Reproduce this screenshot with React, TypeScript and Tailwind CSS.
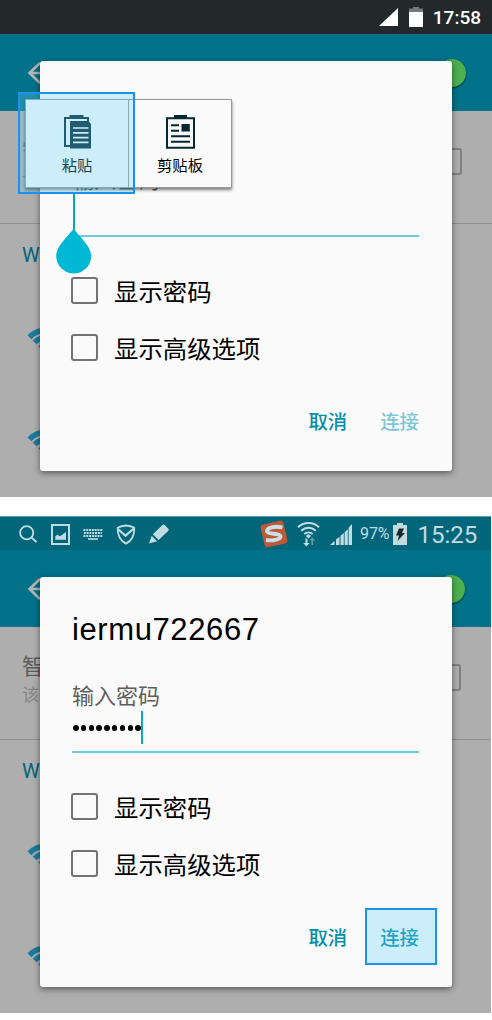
import type { ReactNode } from 'react';

const cjk = "font-['Noto_Sans_CJK_SC',sans-serif]";

function Wifi() {
  return (
    <svg width="40" height="30" viewBox="0 0 40 30" className="block" fill="none" stroke="#1b7b9d" strokeWidth="5.5">
      <path d="M2.4 10.2a24.5 24.5 0 0 1 34.6 0" />
      <path d="M7.6 15.4a17.1 17.1 0 0 1 24.2 0" />
      <path d="M19.7 27.5l-8.3-8.3a11.7 11.7 0 0 1 16.6 0z" fill="#1b7b9d" stroke="none" />
    </svg>
  );
}

function SettingsPage() {
  return (
    <>
      <div className="flex h-[77px] items-center justify-between bg-[#02728a] pr-[26px] pl-[27px]">
        <svg width="28" height="24" viewBox="0 0 28 24" fill="none" stroke="#b4b4b4" strokeWidth="2.6">
          <path d="M13 2 2.5 12 13 22M3 12h24" />
        </svg>
        <div className="size-7 rounded-full bg-[#4caf50] shadow-[0_1px_2px_rgba(0,0,0,0.6)]" />
      </div>
      <div className="flex h-[113px] items-start justify-between border-b border-[#8f8f8f] pr-[30px] pl-[22px]">
        <div className="pt-[22px] whitespace-nowrap">
          <div className="text-[22px] leading-[30px] text-[#5c5c5c]">智能网络切换</div>
          <div className="mt-[3px] text-[17px] leading-[24px] text-[#858585]">该功能</div>
        </div>
        <div className="mt-[37px] size-[27px] rounded-[3px] border-2 border-[#818181]" />
      </div>
      <div className="pt-[19px] pl-[22px] font-[Roboto] text-[20px] leading-[24px] text-[#00657a]">WLAN</div>
      <div className="flex flex-col gap-[72px] pt-[60px] pl-[27px]">
        <Wifi />
        <Wifi />
      </div>
    </>
  );
}

function Option({ children }: { children: ReactNode }) {
  return (
    <div className="flex h-[57px] items-center gap-[16px] text-[24.4px] leading-[36px] text-black">
      <span className="size-[27px] shrink-0 rounded-[3px] border-2 border-[#737373]" />
      <span className="whitespace-nowrap">{children}</span>
    </div>
  );
}

function Dialog({ title, value, ready }: { title: string; value: string; ready: boolean }) {
  return (
    <div className="absolute top-[61px] left-[40px] flex h-[410px] w-[412px] flex-col rounded-[3px] bg-[#fafafa] px-[32px] shadow-[0_2px_6px_rgba(0,0,0,0.5)]">
      <div className="mt-[32px] h-[42px] font-['Liberation_Sans',sans-serif] text-[31px] leading-[42px] tracking-[0.6px] text-black">{title}</div>
      <div className="mt-[27px] text-[22px] leading-[32px] text-[#5e5e5e]">输入密码</div>
      <div className="mt-[1px] mr-[1px] flex h-[42px] items-start border-b-2 border-[#6ccbdc]">
        <div className="flex h-[34px] items-center gap-[2.3px] pl-[1px]">
          {value.split('').map((_, i) => (
            <span key={i} className="size-[5.5px] rounded-full bg-black" />
          ))}
        </div>
        {ready && <span className="h-[33px] w-[2px] bg-[#08a8c8]" />}
      </div>
      <div className="-ml-[1px] pt-[25px]">
        <Option>显示密码</Option>
        <Option>显示高级选项</Option>
      </div>
      <div className="mt-[31px] mr-[1px] flex justify-end gap-[33px] text-[19.4px] leading-[28px] font-medium text-[#058faa]">
        <span>取消</span>
        <span className={ready ? '' : 'text-[#7cc8d6]'}>连接</span>
      </div>
    </div>
  );
}

function PasteIcon() {
  return (
    <svg width="27" height="34" viewBox="0 0 27 34" fill="#052731">
      <path d="M5.5 0h14v2H25v5h-2V4H2v26h5v2H0V2h5.5z" />
      <path d="M6 6h18.5l2.500 3v24.500H6z" />
      <path d="M9 13h15.500M9 17.800h15.500M9 22.600h15.500M9 27.400h15.500" stroke="#fafafa" strokeWidth="1.700" />
    </svg>
  );
}

function ClipboardIcon() {
  return (
    <svg width="29" height="34" viewBox="0 0 29 34" fill="none" stroke="#052731" strokeWidth="2">
      <path d="M1 3.200h27v29.600H1z" />
      <path d="M8 0h13v4H8zM15.500 9h8.300v7.500h-8.300z" fill="#052731" stroke="none" />
      <path d="M5 10.300h8M5 15.700h8M5 21.200h19M5 26.800h19" />
    </svg>
  );
}

function PastePopup() {
  return (
    <div className="absolute top-[99px] left-[25px] flex h-[89px] w-[207px] border border-[#999] bg-[#fafafa] text-[15.3px] leading-[22px] text-black shadow-[0_2px_3px_rgba(0,0,0,0.5)]">
      <div className="flex w-[103px] flex-col items-center border-r border-[#999] pt-[15px]">
        <PasteIcon />
        <span className="mt-[4px]">粘贴</span>
      </div>
      <div className="flex flex-1 flex-col items-center pt-[15px]">
        <ClipboardIcon />
        <span className="mt-[4px]">剪贴板</span>
      </div>
    </div>
  );
}

function DarkStatusBar() {
  return (
    <div className="flex h-[34px] items-center justify-end bg-[#23282b] pr-[11px] text-white">
      <svg width="19" height="20" viewBox="0 0 19 20" fill="currentColor"><path d="M19 1v18H0z" /></svg>
      <svg width="14" height="20" viewBox="0 0 14 20" className="ml-[11px]" fill="currentColor">
        <path d="M4 0h6v1.5h4V6H0V1.5h4z" fill="#777" />
        <path d="M0 5h14v15H0z" />
      </svg>
      <span className="ml-[10px] pt-[2px] font-[Roboto] text-[19px] leading-[24px] font-medium">17:58</span>
    </div>
  );
}

function TealStatusBar() {
  return (
    <div className="flex h-[35px] items-center border-t border-[#5c9eab] bg-[#02667a] pl-[19px] font-[Roboto] text-[#c0dce1]">
      <svg width="18" height="20" viewBox="0 0 18 20" fill="none" stroke="currentColor" strokeWidth="1.8">
        <circle cx="7.7" cy="8.7" r="6.6" />
        <path d="m12.5 13.5 5 4.5" />
      </svg>
      <svg width="19" height="21" viewBox="0 0 19 21" className="ml-[14px]" fill="none" stroke="currentColor" strokeWidth="2">
        <path d="M1 1h17v19H1z" />
        <path d="M4.3 15.8v-3.500l2-1.500 2.800 1.500L15 8v7.800z" fill="currentColor" stroke="none" />
      </svg>
      <svg width="20" height="11" viewBox="0 0 20 11" className="ml-[13px]" fill="none" stroke="currentColor" strokeWidth="2">
        <path d="M.5 1h19" strokeDasharray="2 .8" />
        <path d="M.8 4h18" strokeDasharray="2 .8" />
        <path d="M.5 7h19" strokeDasharray="2 .8" />
        <path d="M5 10h10" strokeWidth="1.6" />
      </svg>
      <svg width="20" height="21" viewBox="0 0 20 21" className="ml-[13px]" fill="none" stroke="currentColor" strokeWidth="1.8">
        <path d="M10 1.5c3 .2 6 .9 8.3 2.2.2 6.8-1.8 12.6-8.3 15.9C3.500 16.300 1.500 10.500 1.700 3.700 4 2.400 7 1.700 10 1.500z" />
        <path d="m2.200 5.200 7.300 6.500L17.800 4.500" strokeWidth="2.200" />
      </svg>
      <svg width="20" height="20" viewBox="0 0 20 20" className="ml-[13px]" fill="currentColor">
        <path d="m3.800 10.200 9.700-9.200q1.300-1 2.500.2l3.300 3.500q1 1-.2 2.200l-9.400 9.200zM2.700 11.800l5.500 5.500L0 19.500z" />
      </svg>

      <svg width="28" height="28" viewBox="0 0 28 28" className="ml-[91px]">
        <rect x="2.300" y="2.300" width="23.400" height="23.400" rx="3" fill="#bd5938" transform="rotate(-13 14 14)" />
        <path d="M22.500 7.500C14.500 5.500 6.500 8 7 11.500c.4 3 13.500 1.500 13.500 5 0 3.200-8 4.500-14.500 3.500" fill="none" stroke="#c9e0e4" strokeWidth="3.800" />
      </svg>
      <svg width="23" height="25" viewBox="0 0 23 25" className="ml-[9px]" fill="none" stroke="currentColor" strokeWidth="2">
        <path d="M1 5.200a15.500 15.500 0 0 1 21 0M4.200 8.700a10.800 10.800 0 0 1 14.600 0M7.300 12a6.300 6.300 0 0 1 8.400 0" />
        <path d="m11.500 16.500-2.600-2.600a3.600 3.600 0 0 1 5.200 0z" fill="currentColor" stroke="none" />
        <path d="M8.500 16.500V21H6.200l3.200 3.500 3.200-3.500h-2.100v-4.500z" fill="currentColor" stroke="none" />
        <path d="M14.300 23v-4.500h-2l2.900-3.200 2.900 3.200h-2V23z" fill="#609ca8" stroke="none" />
      </svg>
      <svg width="22" height="22" viewBox="0 0 22 22" className="ml-[10px]" fill="currentColor">
        <path d="M0 22 4.500 18V22zM6 16.500l3.500-2.800V22H6zM10.500 12.800l3.300-2.800V22h-3.300zM14.600 9.200l3.200-3v16h-3.200zM18.600 4.700 22 1v21h-3.400z" />
      </svg>
      <span className="ml-[8px] text-[16px] leading-[20px] tracking-[-0.1px]">97%</span>
      <svg width="14" height="22" viewBox="0 0 14 22" className="ml-[4px]" fill="currentColor">
        <path d="M4 0h6v2h4v20H0V2h4z" />
        <path d="M6 5.500h5L9 10h3L4.500 18 6 12.500H3z" fill="#18282b" />
      </svg>
      <span className="ml-[10px] pt-[1px] text-[24px] leading-[30px]">15:25</span>
    </div>
  );
}

export default function App() {
  return (
    <div className={`flex h-[1020px] w-[492px] flex-col gap-[19px] overflow-hidden bg-white ${cjk}`}>
      <section className="relative h-[497px] overflow-hidden bg-[#aeaeae]">
        <DarkStatusBar />
        <SettingsPage />
        <Dialog title="" value="" ready={false} />
        <div className="absolute top-[194px] left-[73px] h-[36px] w-[2px] bg-[#0ba6bd]" />
        <svg width="36" height="46" viewBox="0 0 36 46" className="absolute top-[228px] left-[56px]">
          <path d="M17.700 0C20 6 35.200 17 35.200 28a17.500 17.500 0 0 1-35 0C.2 17 15 6 17.700 0z" fill="#00b8d4" />
        </svg>
        <PastePopup />
        <div className="absolute top-[92px] left-[18px] h-[102px] w-[117px] border-2 border-[#1e90ee] bg-[rgba(100,213,255,0.3)]" />
      </section>
      <section className="relative h-[497px] w-[491px] overflow-hidden bg-[#aeaeae]">
        <TealStatusBar />
        <div className="-mt-[1px]">
          <SettingsPage />
        </div>
        <Dialog title="iermu722667" value="722667abc" ready />
        <div className="absolute top-[392px] left-[365px] h-[57px] w-[72px] border-2 border-[#1e90ee] bg-[rgba(100,213,255,0.3)]" />
      </section>
    </div>
  );
}
